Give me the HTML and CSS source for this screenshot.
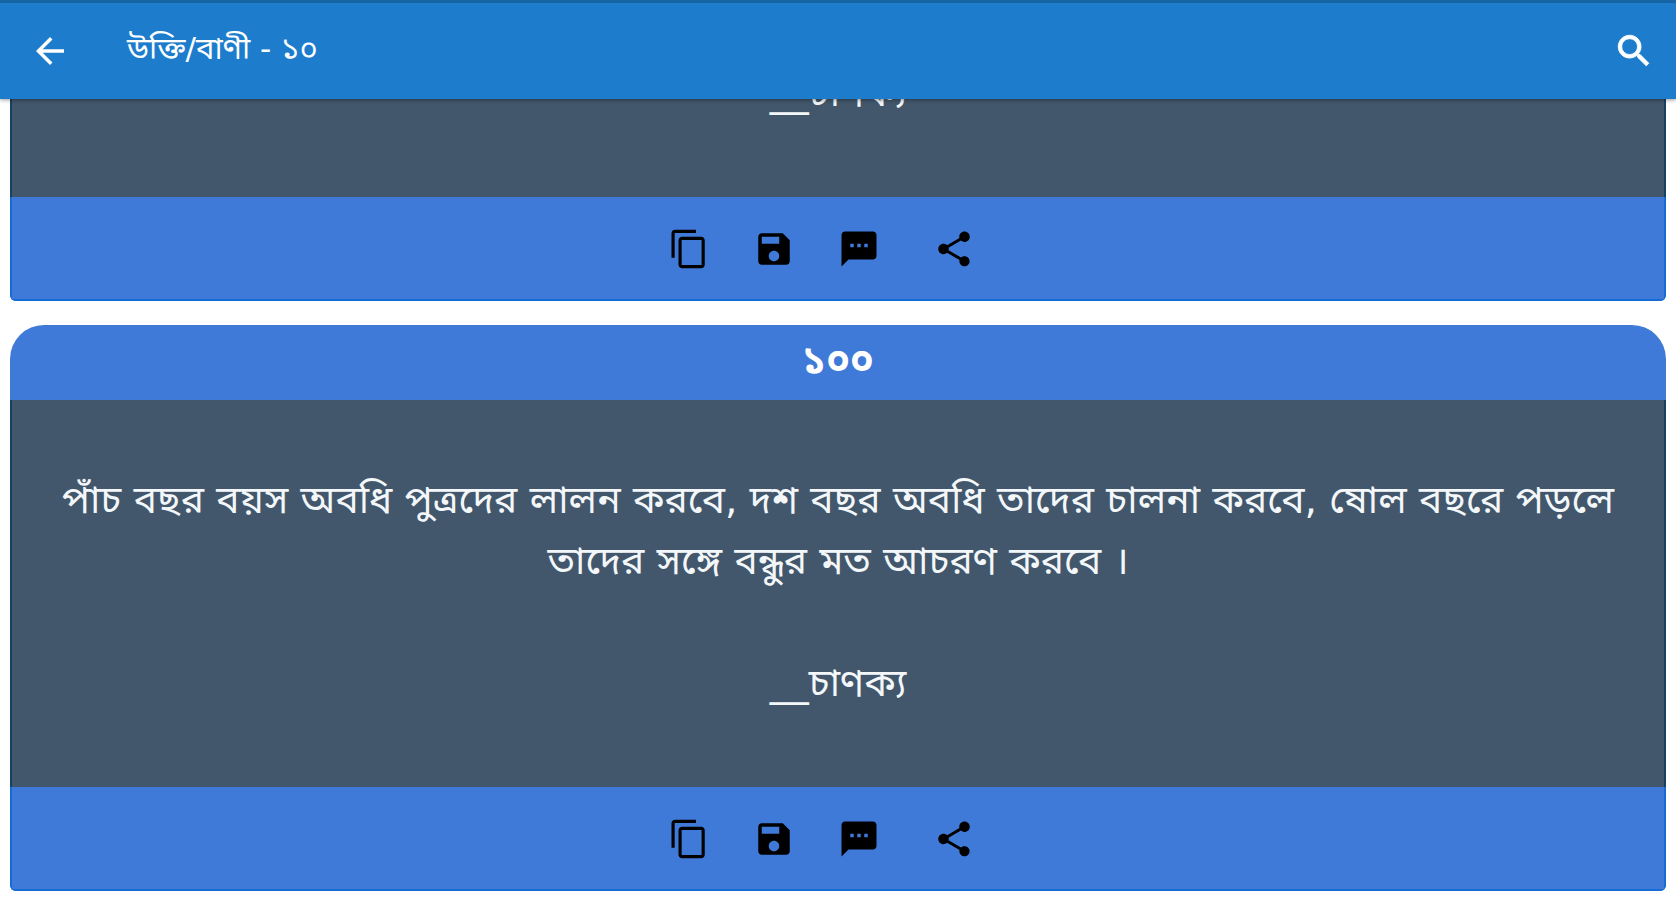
FILE: index.html
```html
<!DOCTYPE html>
<html lang="bn">
<head>
<meta charset="utf-8">
<meta name="viewport" content="width=device-width, initial-scale=1">
<title>উক্তি/বাণী - ১০</title>
<link rel="stylesheet" href="styles.css">
</head>
<body>
<svg class="sprite" aria-hidden="true">
  <symbol id="copy" viewBox="0 0 24 24"><path d="M16 1H4c-1.100 0-2 .9-2 2v14h1.800V2.800H16V1zm3 4H8c-1.100 0-2 .9-2 2v14c0 1.100.9 2 2 2h11c1.100 0 2-.9 2-2V7c0-1.100-.9-2-2-2zm.2 16.200H7.800V6.800h11.400v14.400z"/></symbol>
  <symbol id="save" viewBox="0 0 24 24"><path d="M17 3H5c-1.110 0-2 .9-2 2v14c0 1.100.89 2 2 2h14c1.100 0 2-.9 2-2V7l-4-4zm-5 16c-1.660 0-3-1.340-3-3s1.340-3 3-3 3 1.340 3 3-1.340 3-3 3zm3-10H5V5h10v4z"/></symbol>
  <symbol id="sms" viewBox="0 0 24 24"><path d="M20 2H4c-1.100 0-1.990.9-1.990 2L2 22l4-4h14c1.100 0 2-.9 2-2V4c0-1.100-.9-2-2-2zM9 11H7V9h2v2zm4 0h-2V9h2v2zm4 0h-2V9h2v2z"/></symbol>
  <symbol id="share" viewBox="0 0 24 24"><path d="M18 16.080c-.76 0-1.440.3-1.960.77L8.910 12.700c.05-.23.09-.46.09-.7s-.04-.47-.09-.7l7.050-4.110c.54.5 1.250.81 2.040.81 1.660 0 3-1.340 3-3s-1.340-3-3-3-3 1.340-3 3c0 .24.04.47.09.7L8.040 9.810C7.500 9.310 6.790 9 6 9c-1.660 0-3 1.340-3 3s1.340 3 3 3c.79 0 1.500-.31 2.040-.81l7.120 4.160c-.05.21-.08.43-.08.65 0 1.610 1.310 2.920 2.920 2.920s2.920-1.310 2.920-2.920-1.310-2.920-2.920-2.920z"/></symbol>
  <symbol id="back" viewBox="0 0 24 24"><path d="M20 11H7.830l5.590-5.590L12 4l-8 8 8 8 1.410-1.410L7.830 13H20v-2z"/></symbol>
  <symbol id="search" viewBox="0 0 24 24"><path stroke="currentColor" stroke-width=".5" d="M15.500 14h-.79l-.28-.27C15.410 12.590 16 11.110 16 9.500 16 5.910 13.090 3 9.500 3S3 5.910 3 9.500 5.910 16 9.500 16c1.610 0 3.090-.59 4.230-1.570l.27.28v.79l5 4.990L20.490 19l-4.990-5zm-6 0C7.010 14 5 11.990 5 9.500S7.010 5 9.500 5 14 7.010 14 9.500 11.990 14 9.500 14z"/></symbol>
</svg>
<header class="appbar">
  <button class="icon-button" type="button" aria-label="Back"><svg class="bar-icon"><use href="#back"/></svg></button>
  <h1 class="title">উক্তি/বাণী - ১০</h1>
  <button class="icon-button" type="button" aria-label="Search"><svg class="bar-icon"><use href="#search"/></svg></button>
</header>
<main class="feed">
  <article class="card card-continued">
    <div class="card-body">
      <p class="author">__চাণক্য</p>
    </div>
    <footer class="actions">
      <button class="icon-button" type="button" aria-label="Copy"><svg class="action-icon"><use href="#copy"/></svg></button>
      <button class="icon-button" type="button" aria-label="Save"><svg class="action-icon"><use href="#save"/></svg></button>
      <button class="icon-button" type="button" aria-label="Message"><svg class="action-icon"><use href="#sms"/></svg></button>
      <button class="icon-button share" type="button" aria-label="Share"><svg class="action-icon"><use href="#share"/></svg></button>
    </footer>
  </article>
  <article class="card">
    <h2 class="number">১০০</h2>
    <div class="card-body">
      <p class="quote">পাঁচ বছর বয়স অবধি পুত্রদের লালন করবে, দশ বছর অবধি তাদের চালনা করবে, ষোল বছরে পড়লে তাদের সঙ্গে বন্ধুর মত আচরণ করবে&nbsp;।</p>
      <p class="author">__চাণক্য</p>
    </div>
    <footer class="actions">
      <button class="icon-button" type="button" aria-label="Copy"><svg class="action-icon"><use href="#copy"/></svg></button>
      <button class="icon-button" type="button" aria-label="Save"><svg class="action-icon"><use href="#save"/></svg></button>
      <button class="icon-button" type="button" aria-label="Message"><svg class="action-icon"><use href="#sms"/></svg></button>
      <button class="icon-button share" type="button" aria-label="Share"><svg class="action-icon"><use href="#share"/></svg></button>
    </footer>
  </article>
</main>
</body>
</html>
```
FILE: styles.css
```css
* { box-sizing: border-box; }

body {
  margin: 0;
  background: #fff;
  font-family: "DejaVu Sans", "Noto Sans Bengali", "Noto Sans", sans-serif;
}

h1, h2, p { margin: 0; }

.sprite { display: none; }

.icon-button {
  display: flex;
  padding: 0;
  border: 0;
  background: none;
  color: inherit;
  cursor: pointer;
}

.icon-button svg { fill: currentColor; }

.appbar {
  position: sticky;
  top: 0;
  z-index: 1;
  display: flex;
  align-items: center;
  height: 99px;
  padding: 0 21px 0 29px;
  border-top: 3px solid #1565a5;
  background: #1d7dcc;
  color: #fff;
  box-shadow: 0 1px 4px rgba(0, 0, 0, 0.4);
}

.bar-icon { width: 42px; height: 42px; }

.title {
  flex: 1;
  padding: 0 0 6px 56px;
  font-size: 31px;
  font-weight: 400;
  line-height: 48px;
}

.feed {
  display: flex;
  flex-direction: column;
  gap: 24px;
  padding: 0 10px 10px;
}

.card {
  overflow: hidden;
  border-radius: 34px 34px 6px 6px;
  background: #407ad9;
}

.card-continued { border-radius: 0 0 6px 6px; }

.number {
  padding-bottom: 3px;
  color: #fff;
  font-size: 39px;
  font-weight: 700;
  line-height: 72px;
  text-align: center;
}

.card-body {
  padding: 69px 48px 74px;
  border: solid #17425f;
  border-width: 0 2px;
  background: #42576c;
  color: #f4f7fa;
  font-size: 39px;
  line-height: 61px;
  text-align: center;
}

.card-continued .card-body {
  display: flex;
  flex-direction: column;
  justify-content: flex-end;
  height: 98px;
  padding-top: 0;
  overflow: hidden;
}

.quote + .author { margin-top: 61px; }

.actions {
  display: flex;
  justify-content: center;
  gap: 43px;
  padding: 31px 34px 29px 0;
  border: solid #146cd4;
  border-width: 0 2px 2px;
  color: #000;
}

.action-icon { width: 42px; height: 42px; }

.share { margin-left: 10px; }
```
